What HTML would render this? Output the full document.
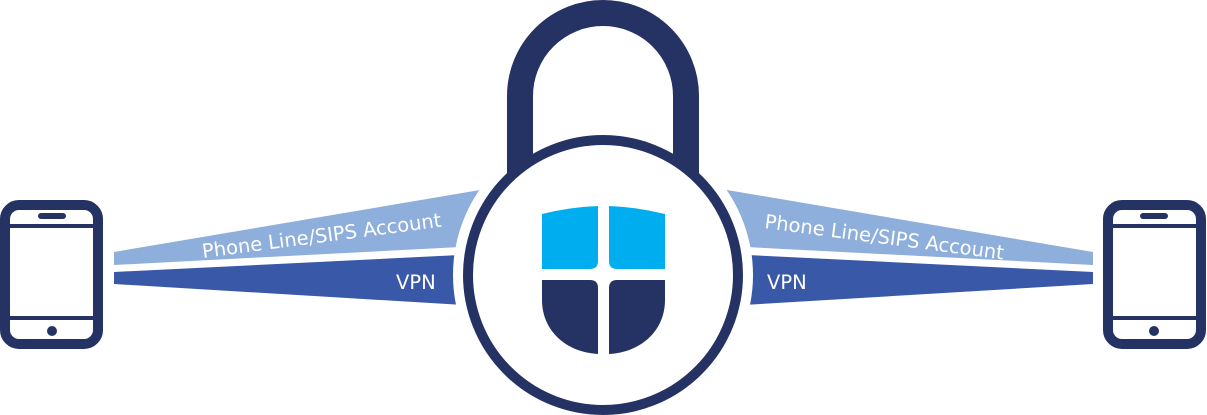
<!DOCTYPE html>
<html><head><style>
html,body{margin:0;padding:0;background:#fff;}
svg{display:block;}
text{font-family:"DejaVu Sans","Liberation Sans",sans-serif;fill:#fff;}
</style></head><body>
<svg width="1207" height="415" viewBox="0 0 1207 415" xmlns="http://www.w3.org/2000/svg">
<defs>
<g id="phone">
<rect x="5" y="205" width="93" height="139" rx="14" fill="none" stroke="#253264" stroke-width="10"/>
<rect x="8" y="224" width="88" height="4" fill="#253264"/>
<rect x="8" y="316" width="88" height="4" fill="#253264"/>
<rect x="38" y="213" width="28" height="6" rx="3" fill="#253264"/>
<circle cx="52" cy="331" r="5" fill="#253264"/>
</g>
</defs>
<!-- bands left -->
<polygon points="114,252 480,190 480,246 114,265" fill="#8EAEDC"/>
<polygon points="114,272 480,254 480,306 114,284" fill="#3A58A8"/>
<!-- bands right -->
<polygon points="1093,252 727,190 727,246 1093,265" fill="#8EAEDC"/>
<polygon points="1093,272 727,254 727,306 1093,284" fill="#3A58A8"/>
<!-- white gap -->
<circle cx="603" cy="275" r="150" fill="#fff"/>
<!-- shackle -->
<path d="M520,200 L520,96 A83,83 0 0 1 686,96 L686,200" fill="none" stroke="#253264" stroke-width="26"/>
<circle cx="603" cy="275" r="135" fill="#fff" stroke="#253264" stroke-width="10"/>
<!-- shield -->
<path d="M542,214 Q570,207 598,206 L598,261 Q598,269 590,269 L542,269 Z" fill="#00AEEF"/>
<path d="M665,214 Q637,207 609,206 L609,261 Q609,269 617,269 L665,269 Z" fill="#00AEEF"/>
<path d="M542,280 L590,280 Q598,280 598,288 L598,354 C565,352 542,330 542,300 Z" fill="#253264"/>
<path d="M665,280 L617,280 Q609,280 609,288 L609,354 C642,352 665,330 665,300 Z" fill="#253264"/>
<!-- phones -->
<use href="#phone"/>
<use href="#phone" transform="translate(1206,0) scale(-1,1)"/>
<!-- text -->
<text x="203" y="258" font-size="19.5" transform="rotate(-7.5 203 258)">Phone Line/SIPS Account</text>
<text x="396" y="289" font-size="19.5">VPN</text>
<text x="764" y="228" font-size="19.5" transform="rotate(7.5 764 228)">Phone Line/SIPS Account</text>
<text x="767" y="289" font-size="19.5">VPN</text>
</svg>
</body></html>
